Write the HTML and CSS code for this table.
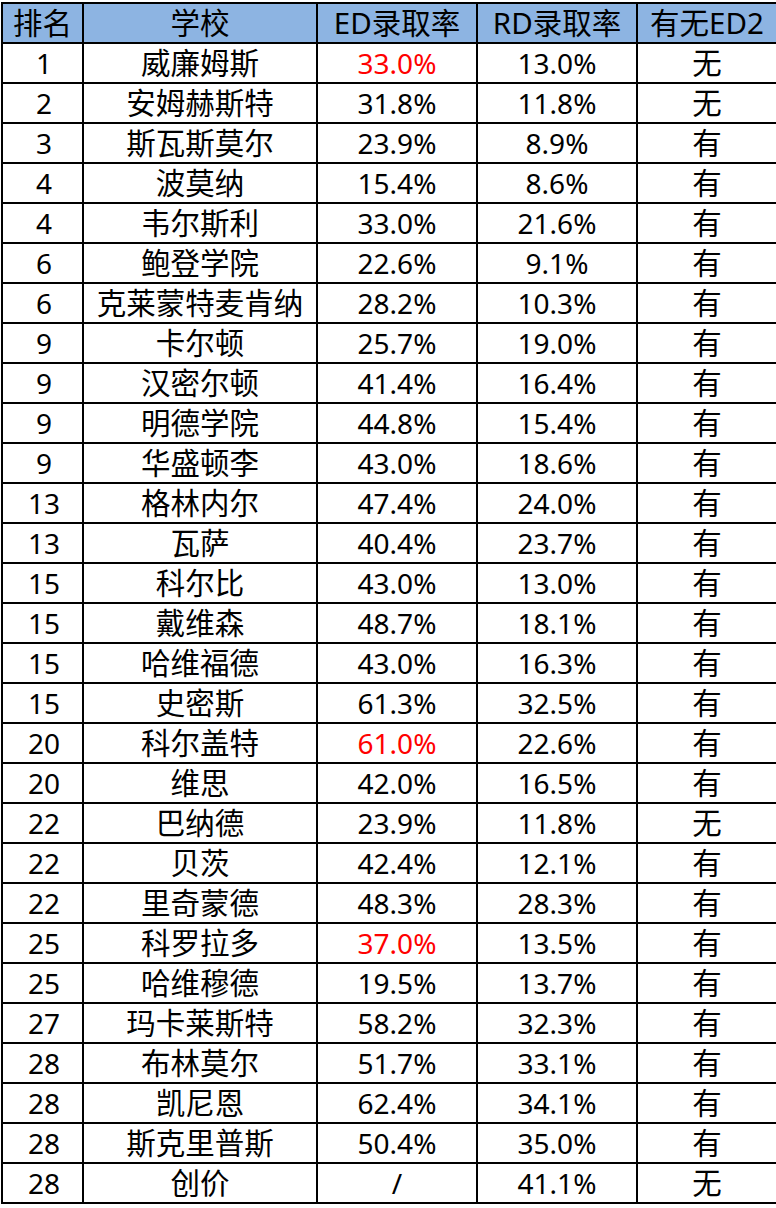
FILE: index.html
```html
<!DOCTYPE html>
<html lang="zh-CN">
<head>
<meta charset="utf-8">
<title>录取率</title>
<link rel="stylesheet" href="styles.css">
</head>
<body>
<table class="rates">
<colgroup>
<col class="c-rank"><col class="c-school"><col class="c-ed"><col class="c-rd"><col class="c-ed2">
</colgroup>
<thead>
<tr><th>排名</th><th>学校</th><th>ED录取率</th><th>RD录取率</th><th>有无ED2</th></tr>
</thead>
<tbody>
<tr><td>1</td><td>威廉姆斯</td><td class="red">33.0%</td><td>13.0%</td><td>无</td></tr>
<tr><td>2</td><td>安姆赫斯特</td><td>31.8%</td><td>11.8%</td><td>无</td></tr>
<tr><td>3</td><td>斯瓦斯莫尔</td><td>23.9%</td><td>8.9%</td><td>有</td></tr>
<tr><td>4</td><td>波莫纳</td><td>15.4%</td><td>8.6%</td><td>有</td></tr>
<tr><td>4</td><td>韦尔斯利</td><td>33.0%</td><td>21.6%</td><td>有</td></tr>
<tr><td>6</td><td>鲍登学院</td><td>22.6%</td><td>9.1%</td><td>有</td></tr>
<tr><td>6</td><td>克莱蒙特麦肯纳</td><td>28.2%</td><td>10.3%</td><td>有</td></tr>
<tr><td>9</td><td>卡尔顿</td><td>25.7%</td><td>19.0%</td><td>有</td></tr>
<tr><td>9</td><td>汉密尔顿</td><td>41.4%</td><td>16.4%</td><td>有</td></tr>
<tr><td>9</td><td>明德学院</td><td>44.8%</td><td>15.4%</td><td>有</td></tr>
<tr><td>9</td><td>华盛顿李</td><td>43.0%</td><td>18.6%</td><td>有</td></tr>
<tr><td>13</td><td>格林内尔</td><td>47.4%</td><td>24.0%</td><td>有</td></tr>
<tr><td>13</td><td>瓦萨</td><td>40.4%</td><td>23.7%</td><td>有</td></tr>
<tr><td>15</td><td>科尔比</td><td>43.0%</td><td>13.0%</td><td>有</td></tr>
<tr><td>15</td><td>戴维森</td><td>48.7%</td><td>18.1%</td><td>有</td></tr>
<tr><td>15</td><td>哈维福德</td><td>43.0%</td><td>16.3%</td><td>有</td></tr>
<tr><td>15</td><td>史密斯</td><td>61.3%</td><td>32.5%</td><td>有</td></tr>
<tr><td>20</td><td>科尔盖特</td><td class="red">61.0%</td><td>22.6%</td><td>有</td></tr>
<tr><td>20</td><td>维思</td><td>42.0%</td><td>16.5%</td><td>有</td></tr>
<tr><td>22</td><td>巴纳德</td><td>23.9%</td><td>11.8%</td><td>无</td></tr>
<tr><td>22</td><td>贝茨</td><td>42.4%</td><td>12.1%</td><td>有</td></tr>
<tr><td>22</td><td>里奇蒙德</td><td>48.3%</td><td>28.3%</td><td>有</td></tr>
<tr><td>25</td><td>科罗拉多</td><td class="red">37.0%</td><td>13.5%</td><td>有</td></tr>
<tr><td>25</td><td>哈维穆德</td><td>19.5%</td><td>13.7%</td><td>有</td></tr>
<tr><td>27</td><td>玛卡莱斯特</td><td>58.2%</td><td>32.3%</td><td>有</td></tr>
<tr><td>28</td><td>布林莫尔</td><td>51.7%</td><td>33.1%</td><td>有</td></tr>
<tr><td>28</td><td>凯尼恩</td><td>62.4%</td><td>34.1%</td><td>有</td></tr>
<tr><td>28</td><td>斯克里普斯</td><td>50.4%</td><td>35.0%</td><td>有</td></tr>
<tr><td>28</td><td>创价</td><td>/</td><td>41.1%</td><td>无</td></tr>
</tbody>
</table>
</body>
</html>
```
FILE: styles.css
```css
html, body {
  margin: 0;
  padding: 0;
  background: #ffffff;
}
body {
  font-family: "Noto Sans", "Noto Sans CJK SC", sans-serif;
  color: #000000;
}
.rates {
  border-collapse: collapse;
  table-layout: fixed;
  width: 775px;
  margin: 2px 0 0 1px;
}
.c-rank { width: 81px; }
.c-school { width: 234px; }
.c-ed { width: 160px; }
.c-rd { width: 160px; }
.c-ed2 { width: 140px; }
.rates th,
.rates td {
  border: 2px solid #000000;
  padding: 0;
  height: 38px;
  text-align: center;
  vertical-align: middle;
  font-size: 28px;
  font-weight: normal;
  line-height: 38px;
  white-space: nowrap;
  overflow: hidden;
}
.rates th,
.rates td:nth-child(2),
.rates td:nth-child(5) {
  font-size: 29.5px;
}
.rates td:first-child {
  padding-left: 3px;
}
.rates th {
  background: #8db4e2;
}
.rates td.red {
  color: #ff0000;
}
```
